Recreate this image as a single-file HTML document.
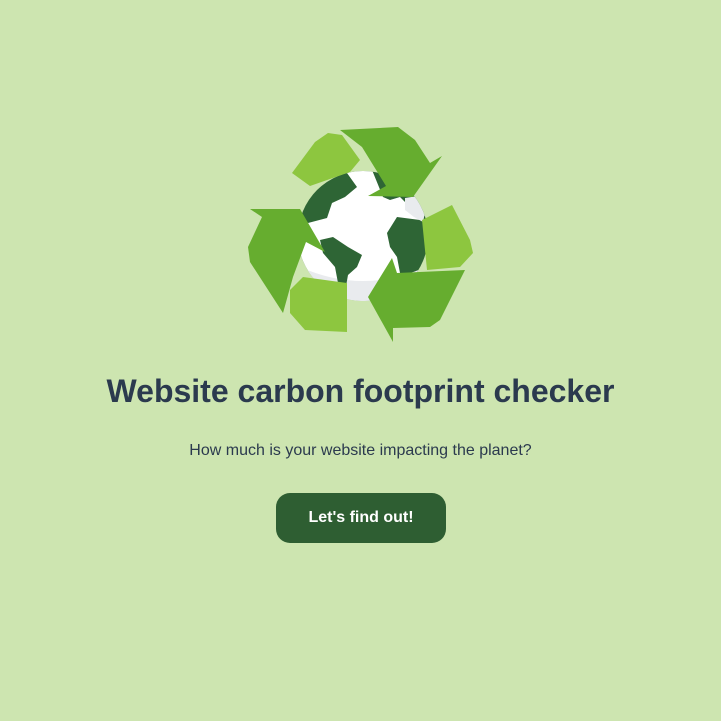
<!DOCTYPE html>
<html><head><meta charset="utf-8"><style>
html,body{margin:0;padding:0;width:721px;height:721px;background:#cde5b0;overflow:hidden;font-family:"Liberation Sans",Arial,sans-serif}
svg{position:absolute;left:0;top:0}
h1{position:absolute;top:371px;left:0;width:721px;margin:0;text-align:center;font-size:32px;font-weight:bold;color:#2b3a4e;line-height:40px}
p{position:absolute;top:441px;left:0;width:721px;margin:0;text-align:center;font-size:16px;color:#2b3a4e;line-height:20px}
.btn{position:absolute;left:276px;top:493px;width:170px;height:50px;border-radius:14px;background:#2e5e32;color:#fff;font-weight:bold;font-size:16px;line-height:50px;text-align:center}
</style></head><body>
<svg width="721" height="721" viewBox="0 0 721 721">
  <defs><clipPath id="g"><circle cx="363" cy="236" r="65"/></clipPath></defs>
  <circle cx="363" cy="236" r="65" fill="#2e6535"/>
  <g clip-path="url(#g)">
    <path d="M298 250 L308 223 L327 218 L332 203 L345 197 L357 187 L347 173 L370 165 L383 197 L390 200 L400 197 L410 207 L420 220 L397 217 L387 233 L390 247 L397 257 L400 273 L402 310 L300 310Z" fill="#fff"/>
    <path d="M290 262 Q363 300 436 262 L436 310 L290 310Z" fill="#e9ebee"/>
    <path d="M320 240 L333 237 L348 247 L362 255 L357 267 L348 275 L345 292 L338 283 L335 267 L323 253Z" fill="#2e6535"/>
    <path d="M405 198 L418 196 L426 208 L423 222 L414 217 L405 210Z" fill="#e9ebee"/>
  </g>
  <path d="M340 130 L398 127 L415 140 L430 163 L442 156 L413 197 L368 196 L386 186 L362 147Z" fill="#66ad2f"/>
  <path d="M292 173 L315 142 L328 133 L342 135 L360 160 L350 172 L310 186Z" fill="#8dc63f"/>
  <path d="M250 209 L300 209 L325 252 L306 242 L293 277 L283 313 L250 262 L248 247 L262 217Z" fill="#66ad2f"/>
  <path d="M290 290 L303 277 L347 283 L347 332 L305 330 L290 313Z" fill="#8dc63f"/>
  <path d="M392 258 L397 273 L465 270 L440 320 L430 327 L393 328 L393 342 L368 297Z" fill="#66ad2f"/>
  <path d="M422 220 L452 205 L470 240 L473 253 L460 267 L427 270Z" fill="#8dc63f"/>
</svg>
<h1>Website carbon footprint checker</h1>
<p>How much is your website impacting the planet?</p>
<div class="btn">Let's find out!</div>
</body></html>
